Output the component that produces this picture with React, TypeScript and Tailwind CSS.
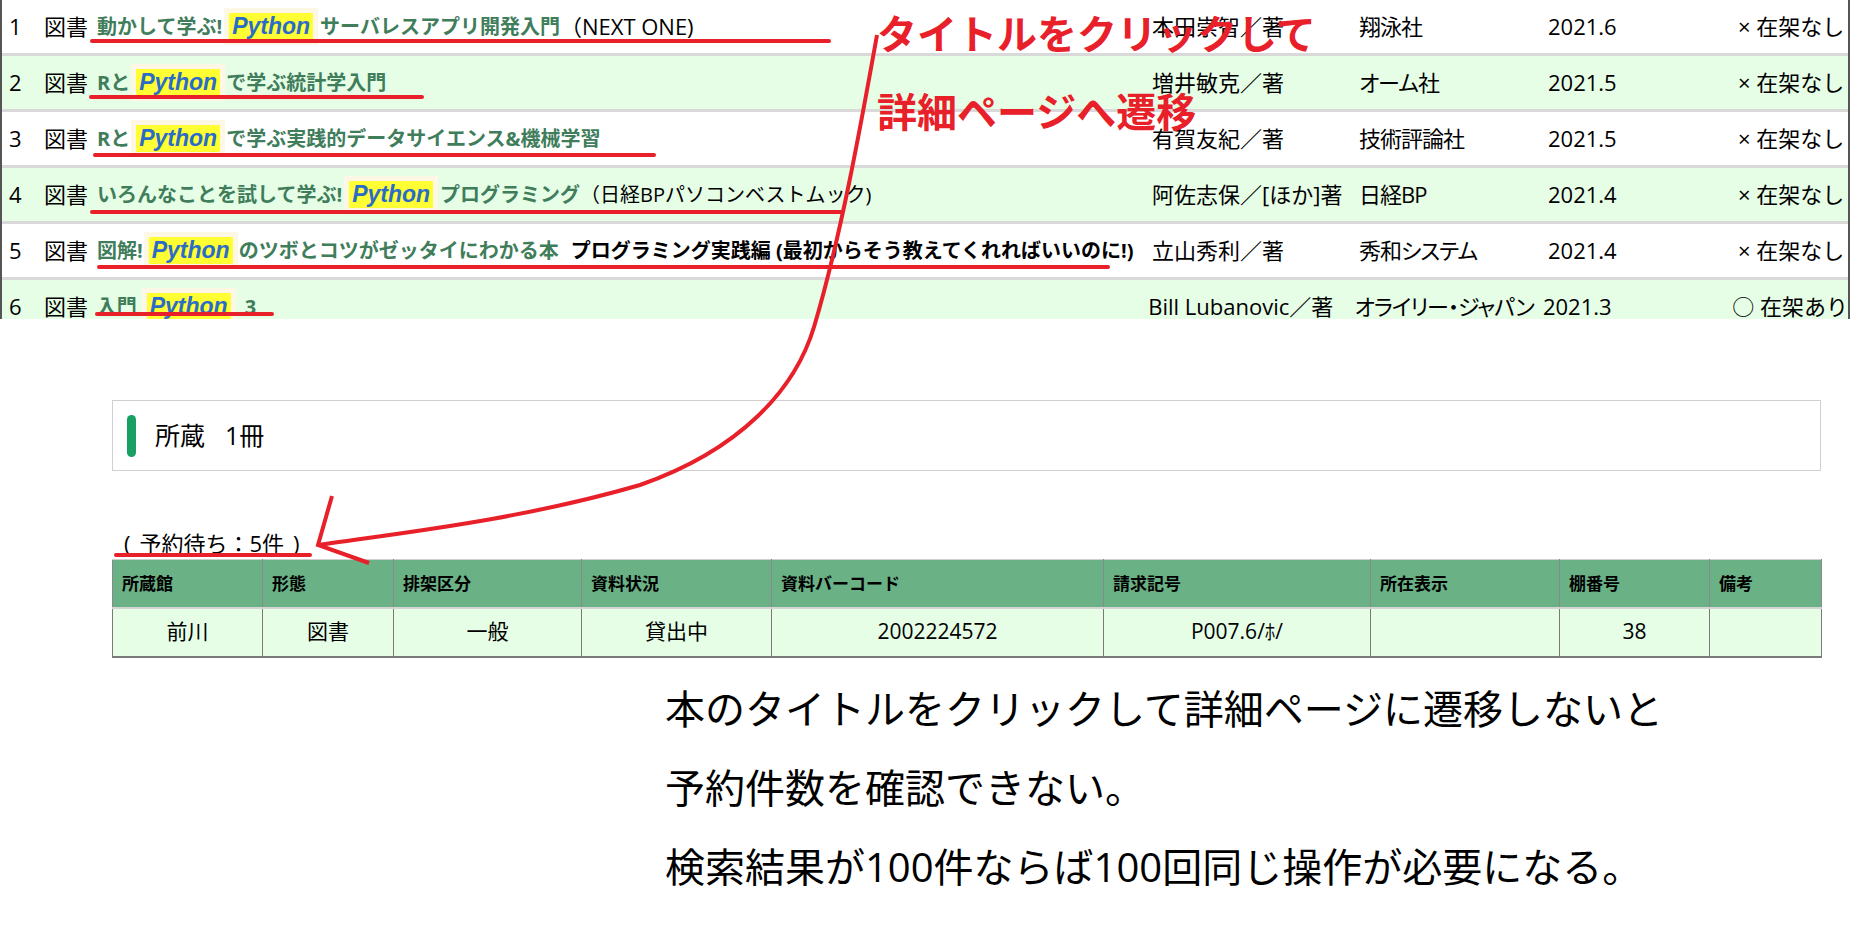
import React from 'react';

type Book = {
  no: number;
  title: React.ReactNode;
  author: string;
  publisher: string;
  year: string;
  status: string;
};

function Py({ className = '' }: { className?: string }) {
  return (
    <span
      className={`inline-block bg-[#ffff33] px-[3px] font-['Liberation_Sans',sans-serif] text-[23px] leading-[27px] font-bold italic text-[#2b6cc8] shadow-[0_0_0_5px_#fdf8e6] ${className}`}
    >
      Python
    </span>
  );
}

const books: Book[] = [
  {
    no: 1,
    title: (
      <>
        <span className="font-bold text-[#3f7d5b]">動かして学ぶ!</span>
        <Py className="mx-[7px]" />
        <span className="font-bold text-[#3f7d5b]">サーバレスアプリ開発入門</span>
        <span className="text-[22px] text-black">（NEXT ONE)</span>
      </>
    ),
    author: '本田崇智／著',
    publisher: '翔泳社',
    year: '2021.6',
    status: '× 在架なし',
  },
  {
    no: 2,
    title: (
      <>
        <span className="font-bold text-[#3f7d5b]">Rと</span>
        <Py className="mx-[6px]" />
        <span className="font-bold text-[#3f7d5b]">で学ぶ統計学入門</span>
      </>
    ),
    author: '増井敏克／著',
    publisher: 'オーム社',
    year: '2021.5',
    status: '× 在架なし',
  },
  {
    no: 3,
    title: (
      <>
        <span className="font-bold text-[#3f7d5b]">Rと</span>
        <Py className="mx-[6px]" />
        <span className="font-bold text-[#3f7d5b]">で学ぶ実践的データサイエンス&amp;機械学習</span>
      </>
    ),
    author: '有賀友紀／著',
    publisher: '技術評論社',
    year: '2021.5',
    status: '× 在架なし',
  },
  {
    no: 4,
    title: (
      <>
        <span className="font-bold text-[#3f7d5b]">いろんなことを試して学ぶ!</span>
        <Py className="mx-[7px]" />
        <span className="font-bold text-[#3f7d5b]">プログラミング</span>
        <span className="text-black">（日経BPパソコンベストムック)</span>
      </>
    ),
    author: '阿佐志保／[ほか]著',
    publisher: '日経BP',
    year: '2021.4',
    status: '× 在架なし',
  },
  {
    no: 5,
    title: (
      <>
        <span className="font-bold text-[#3f7d5b]">図解!</span>
        <Py className="mx-[6px]" />
        <span className="font-bold text-[#3f7d5b]">のツボとコツがゼッタイにわかる本</span>
        <span className="ml-[12px] font-bold text-black">プログラミング実践編 (最初からそう教えてくれればいいのに!)</span>
      </>
    ),
    author: '立山秀利／著',
    publisher: '秀和システム',
    year: '2021.4',
    status: '× 在架なし',
  },
  {
    no: 6,
    title: (
      <>
        <span className="font-bold text-[#3f7d5b]">入門</span>
        <Py className="ml-[10px] mr-[14px]" />
        <span className="font-bold text-[#3f7d5b]">3</span>
      </>
    ),
    author: 'Bill Lubanovic／著',
    publisher: 'オライリー・ジャパン',
    year: '2021.3',
    status: '○ 在架あり',
  },
];

const cols = [
  { head: '所蔵館', w: 'w-[150px]', v: '前川' },
  { head: '形態', w: 'w-[131px]', v: '図書' },
  { head: '排架区分', w: 'w-[188px]', v: '一般' },
  { head: '資料状況', w: 'w-[190px]', v: '貸出中' },
  { head: '資料バーコード', w: 'w-[332px]', v: '2002224572' },
  { head: '請求記号', w: 'w-[267px]', v: 'P007.6/ﾎ/' },
  { head: '所在表示', w: 'w-[189px]', v: '' },
  { head: '棚番号', w: 'w-[150px]', v: '38' },
  { head: '備考', w: 'w-[112px]', v: '' },
];

function Annotations() {
  const red = '#e8202a';
  const underlines: [number, number, number][] = [
    [92, 829, 41],
    [91, 422, 97],
    [95, 654, 155],
    [92, 841, 212],
    [99, 1108, 267],
    [97, 272, 314],
    [116, 310, 555],
  ];
  return (
    <svg className="pointer-events-none absolute left-0 top-0 z-10" width="1856" height="946">
      {underlines.map(([x1, x2, y], i) => (
        <line key={i} x1={x1} x2={x2} y1={y} y2={y} stroke={red} strokeWidth="4" strokeLinecap="round" />
      ))}
      <path
        d="M 877 35 C 860 130, 840 240, 814 327 C 795 390, 740 450, 640 485 C 520 520, 400 533, 318 545"
        fill="none"
        stroke={red}
        strokeWidth="4"
      />
      <path d="M 332 496 L 318 545 L 369 563" fill="none" stroke={red} strokeWidth="4" />
    </svg>
  );
}

export default function App() {
  return (
    <div className="relative h-[946px] w-[1856px] overflow-hidden bg-white font-['Open_Sans','Noto_Sans_CJK_JP',sans-serif] text-black">
      {/* search results */}
      <div className="h-[319px] w-[1850px] overflow-hidden border-x-2 border-[#555]">
        {books.map((b, i) => (
          <div
            key={b.no}
            className={`flex h-[56px] items-center whitespace-nowrap border-b-[3px] border-[#d9d9d9] text-[22px] ${
              i % 2 === 1 ? 'bg-[#e6fde6]' : 'bg-white'
            }`}
          >
            <div className="w-[42px] pl-[7px]">{b.no}</div>
            <div className="w-[53px]">図書</div>
            <div className="flex w-[1055px] items-center text-[20px]">{b.title}</div>
            <div className="w-[207px]">{b.author}</div>
            <div className="w-[189px] tracking-[-1px] [font-feature-settings:'palt']">{b.publisher}</div>
            <div className="w-[190px]">{b.year}</div>
            <div className="flex-1">{b.status}</div>
          </div>
        ))}
      </div>

      {/* holdings */}
      <div className="ml-[112px] mt-[81px] flex h-[71px] w-[1709px] items-center border border-[#d0d0d0]">
        <div className="ml-[14px] h-[42px] w-[9px] rounded-full bg-[#17a062]" />
        <div className="ml-[19px] text-[25px] leading-none">
          所蔵<span className="ml-[20px]">1冊</span>
        </div>
      </div>

      <div className="mt-[60px] flex h-[24px] pl-[124px] text-[22px] leading-[24px]">
        <span>(</span>
        <span className="ml-[9px]">予約待ち：5件</span>
        <span className="ml-[9px]">)</span>
      </div>

      <table className="ml-[112px] mt-[4px] table-fixed border-collapse">
        <thead>
          <tr className="h-[48px] bg-[#6ab186]">
            {cols.map((c) => (
              <th
                key={c.head}
                className={`${c.w} border-x border-t border-[#8a8a8a] border-t-[#cfcfcf] pl-[9px] text-left text-[17px] font-bold`}
              >
                {c.head}
              </th>
            ))}
          </tr>
        </thead>
        <tbody>
          <tr className="h-[49px] bg-[#e6fde6]">
            {cols.map((c) => (
              <td
                key={c.head}
                className="border-x border-b-2 border-t-2 border-[#7a7a7a] border-t-[#d4d4d4] text-center text-[21px]"
              >
                {c.v}
              </td>
            ))}
          </tr>
        </tbody>
      </table>

      <div className="mt-[11px] pl-[665px] text-[40px] leading-[79px]">
        <p>本のタイトルをクリックして詳細ページに遷移しないと</p>
        <p>予約件数を確認できない。</p>
        <p>検索結果が100件ならば100回同じ操作が必要になる。</p>
      </div>

      <Annotations />

      <div className="pointer-events-none absolute left-[877px] top-[14px] z-20 text-[40px] font-bold leading-none text-[#e8202a]">
        タイトルをクリックして
      </div>
      <div className="pointer-events-none absolute left-[877px] top-[92px] z-20 text-[40px] font-bold leading-none text-[#e8202a]">
        詳細ページへ遷移
      </div>
    </div>
  );
}
